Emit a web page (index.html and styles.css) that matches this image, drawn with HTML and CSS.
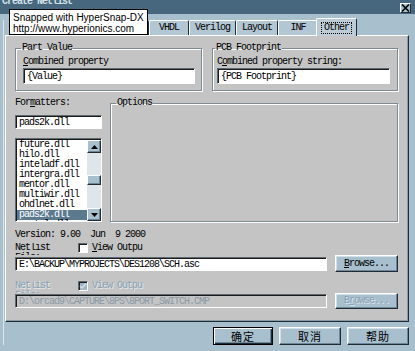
FILE: index.html
```html
<!DOCTYPE html>
<html lang="zh">
<head>
  <meta charset="UTF-8">
  <title>Create Netlist</title>
  <link rel="stylesheet" href="styles.css">
</head>
<body>
  <div class="titlebar">
    <span class="title">Create Netlist</span>
    <span class="close">
      <svg width="9" height="8" viewBox="0 0 9 8"><path d="M1 0.5 L8 7.5 M8 0.5 L1 7.5" stroke="#000" stroke-width="1.6"/></svg>
    </span>
  </div>

  <div class="frame">
    <div class="tabs">
      <!-- first tabs sit under the grabber label -->
      <span class="tab tab-covered"></span>
      <span class="tab">VHDL</span>
      <span class="tab">Verilog</span>
      <span class="tab">Layout</span>
      <span class="tab">INF</span>
      <span class="tab tab-active"><span class="focus">Other</span></span>
    </div>

    <div class="panel">
      <div class="top-row">
        <fieldset class="group">
          <legend>Part Value</legend>
          <div class="caption"><u>C</u>ombined property</div>
          <div class="field">{Value}</div>
        </fieldset>
        <fieldset class="group group-right">
          <legend>PCB Footprint</legend>
          <div class="caption">C<u>o</u>mbined property string:</div>
          <div class="field">{PCB Footprint}</div>
        </fieldset>
      </div>

      <div class="mid-row">
        <div class="formatters">
          <div class="caption">For<u>m</u>atters:</div>
          <div class="field field-small">pads2k.dll</div>
          <div class="listbox">
            <ul class="items">
              <li>future.dll</li>
              <li>hilo.dll</li>
              <li>inteladf.dll</li>
              <li>intergra.dll</li>
              <li>mentor.dll</li>
              <li>multiwir.dll</li>
              <li>ohdlnet.dll</li>
              <li class="selected">pads2k.dll</li>
              <li>protel.dll</li>
            </ul>
            <div class="scrollbar">
              <span class="sb-btn">
                <svg width="7" height="4" viewBox="0 0 7 4"><path d="M3.5 0 L7 4 L0 4 Z" fill="#000"/></svg>
              </span>
              <div class="sb-track">
                <span class="sb-thumb"></span>
              </div>
              <span class="sb-btn">
                <svg width="7" height="4" viewBox="0 0 7 4"><path d="M0 0 L7 0 L3.5 4 Z" fill="#000"/></svg>
              </span>
            </div>
          </div>
        </div>
        <fieldset class="group options">
          <legend>Options</legend>
        </fieldset>
      </div>

      <div class="version">Version: 9.00  Jun  9 2000</div>

      <div class="check-row">
        <div class="row-label">Netlist<br>File:</div>
        <span class="checkbox"></span>
        <span><u>V</u>iew Outpu</span>
      </div>
      <div class="path-row">
        <div class="field field-path">E:\BACKUP\MYPROJECTS\DES1208\SCH.asc</div>
        <button class="btn btn-browse" type="button"><u>B</u>rowse...</button>
      </div>

      <div class="check-row check-row-disabled">
        <div class="row-label">Netlist<br>File:</div>
        <span class="checkbox checkbox-disabled">
          <svg width="8" height="8" viewBox="0 0 8 8"><path d="M1 4 L3 6 L7 1.5" stroke="#d4e0e8" stroke-width="1.5" fill="none"/></svg>
        </span>
        <span>View Outpu</span>
      </div>
      <div class="path-row path-row-disabled">
        <div class="field field-path field-disabled">D:\orcad9\CAPTURE\8PS\8PORT_SWITCH.CMP</div>
        <button class="btn btn-browse btn-disabled" type="button">B<u>r</u>owse...</button>
      </div>
    </div>

    <div class="actions">
      <button class="btn btn-action btn-default" type="button">确定</button>
      <button class="btn btn-action" type="button">取消</button>
      <button class="btn btn-action" type="button">帮助</button>
    </div>
  </div>

  <div class="snap-label">Snapped with HyperSnap-DX<br>http://www.hyperionics.com</div>
</body>
</html>
```

FILE: styles.css
```css
:root {
  --face: #a8bfce;
  --face-light: #d3e0e8;
  --face-dark: #6f8796;
  --edge: #1f2c35;
  --page: #c4c4c4;
  --disabled: #8aa2b3;
}
body {
  margin: 0;
  width: 415px;
  height: 351px;
  overflow: hidden;
  position: relative;
  background: var(--face);
  font-family: "Liberation Mono", "DejaVu Sans Mono", monospace;
  font-size: 10px;
  letter-spacing: -1px;
  line-height: 10px;
  color: #000;
}
u {
  text-decoration: underline;
  text-underline-offset: 1px;
}

/* title bar, top is cut off in the shot */
.titlebar {
  height: 14px;
  background: #46677d;
  display: flex;
  justify-content: space-between;
  align-items: flex-start;
  padding: 0 4px 0 2px;
  overflow: hidden;
}
.title {
  color: #d6e2ea;
  font-weight: bold;
  margin-top: -3px;
}
.close {
  width: 11px;
  height: 10px;
  margin-top: 3px;
  box-sizing: border-box;
  background: var(--face);
  border: 1px solid;
  border-color: #fff var(--edge) var(--edge) #fff;
  display: flex;
  align-items: center;
  justify-content: center;
}

.frame {
  margin-left: 3px;
  border-left: 1px solid #dbe6ed;
  padding-left: 1px;
}

/* tabs */
.tabs {
  display: flex;
  align-items: flex-end;
  height: 15px;
  margin-top: 6px;
  padding-left: 4px;
}
.tab {
  height: 15px;
  box-sizing: border-box;
  min-width: 40px;
  padding: 0 5px;
  text-align: center;
  line-height: 13px;
  background: #b2c6d3;
  border-top: 1px solid #fff;
  border-left: 1px solid #fff;
  border-right: 1px solid var(--edge);
  border-radius: 2px 2px 0 0;
}
.tab-covered {
  width: 140px;
}
.tab-active {
  height: 18px;
  margin: 0 -2px -1px -2px;
  padding: 2px 5px 0 5px;
  position: relative;
  z-index: 1;
  background: #bcccd6;
}
.focus {
  display: inline-block;
  outline: 1px dotted #000;
  padding: 0 2px;
  line-height: 10px;
}

/* property page */
.panel {
  width: 404px;
  height: 287px;
  box-sizing: border-box;
  background: var(--page);
  border-top: 1px solid #fff;
  border-left: 1px solid #fff;
  border-right: 1px solid var(--edge);
  border-bottom: 1px solid var(--edge);
  box-shadow: inset -1px -1px 0 #8c9aa4;
  padding: 7px 10px 0 9px;
}
.top-row {
  display: grid;
  grid-template-columns: 187px 186px;
  column-gap: 10px;
}
.group {
  margin: 0;
  min-width: 0;
  padding: 0 6px 6px 7px;
  border: 1px solid #7d8a92;
  box-shadow: inset 1px 1px 0 #fff, 1px 1px 0 #fff;
}
.group-right {
  padding-left: 4px;
  padding-right: 7px;
}
.group legend {
  padding: 0 1px;
  margin-left: -2px;
  line-height: 10px;
}
.caption {
  margin-top: 4px;
  line-height: 10px;
  white-space: pre;
}
.field {
  height: 16px;
  margin-top: 1px;
  box-sizing: border-box;
  background: #fff;
  border-top: 1px solid #5e6a72;
  border-left: 1px solid #5e6a72;
  border-right: 1px solid #fff;
  border-bottom: 1px solid #fff;
  box-shadow: inset 1px 1px 0 #1b1b1b;
  padding: 2px 0 0 3px;
  line-height: 11px;
  white-space: pre;
  overflow: hidden;
}

.mid-row {
  display: flex;
  gap: 8px;
  margin-top: 7px;
}
.formatters {
  width: 87px;
  flex: none;
}
.formatters .caption {
  margin-top: 0;
}
.field-small {
  height: 14px;
  margin-top: 7px;
  padding-top: 1px;
}
.options {
  flex: 1;
  height: 124px;
  box-sizing: border-box;
}

.listbox {
  height: 84px;
  margin-top: 9px;
  box-sizing: border-box;
  display: flex;
  background: #fff;
  border-top: 1px solid #5e6a72;
  border-left: 1px solid #5e6a72;
  border-right: 1px solid #fff;
  border-bottom: 1px solid #fff;
  box-shadow: inset 1px 1px 0 #1b1b1b;
  padding: 1px 0 0 1px;
  overflow: hidden;
}
.items {
  list-style: none;
  margin: 0;
  padding: 0;
  flex: 1;
}
.items li {
  height: 10px;
  padding-left: 2px;
  white-space: pre;
}
.items .selected {
  background: #5b7a90;
  color: #fff;
}
.scrollbar {
  width: 14px;
  display: flex;
  flex-direction: column;
}
.sb-btn, .sb-thumb {
  box-sizing: border-box;
  background: var(--face);
  border: 1px solid;
  border-color: #fff var(--edge) var(--edge) #fff;
  box-shadow: inset -1px -1px 0 var(--face-dark);
}
.sb-btn {
  height: 13px;
  display: flex;
  align-items: center;
  justify-content: center;
}
.sb-track {
  flex: 1;
  background: #dfe6eb;
}
.sb-thumb {
  display: block;
  height: 10px;
  margin-top: 22px;
}

.version {
  margin-top: 8px;
  white-space: pre;
}
.check-row {
  display: flex;
  align-items: flex-start;
  height: 12px;
  margin-top: 3px;
}
.row-label {
  width: 63px;
  height: 12px;
  overflow: hidden;
}
.checkbox {
  width: 10px;
  height: 10px;
  margin-right: 4px;
  box-sizing: border-box;
  background: #fff;
  border-top: 1px solid #5e6a72;
  border-left: 1px solid #5e6a72;
  border-right: 1px solid #fff;
  border-bottom: 1px solid #fff;
  box-shadow: inset 1px 1px 0 #1b1b1b;
  display: flex;
  align-items: center;
  justify-content: center;
}
.checkbox-disabled {
  background: #9fb4c3;
}
.check-row-disabled {
  margin-top: 9px;
  color: var(--disabled);
  text-shadow: 1px 1px 0 #e2e8ec;
}

.path-row {
  display: flex;
  align-items: center;
  gap: 8px;
  height: 17px;
}
.path-row-disabled {
  height: 16px;
}
.field-path {
  flex: 1;
  height: 14px;
  margin-top: 0;
  padding-top: 1px;
}
.field-disabled {
  background: var(--page);
  color: #8b9aa6;
}

/* buttons */
.btn {
  font: inherit;
  letter-spacing: inherit;
  color: #000;
  margin: 0;
  padding: 0;
  box-sizing: border-box;
  background: var(--face);
  border: 1px solid;
  border-color: #fff var(--edge) var(--edge) #fff;
  box-shadow: inset -1px -1px 0 var(--face-dark), inset 1px 1px 0 var(--face-light);
}
.btn-browse {
  width: 63px;
  height: 17px;
  flex: none;
}
.path-row-disabled .btn-browse {
  height: 16px;
}
.btn-disabled {
  color: var(--disabled);
  text-shadow: 1px 1px 0 #d8e3ea;
}
.actions {
  display: flex;
  justify-content: flex-end;
  gap: 6px;
  width: 404px;
  margin-top: 5px;
}
.btn-action {
  width: 62px;
  height: 18px;
  font-family: "Noto Sans CJK SC", sans-serif;
  font-size: 11px;
  letter-spacing: 1px;
  line-height: 14px;
}
.btn-default {
  width: 60px;
  border: 1px solid #000;
  box-shadow: inset 1px 1px 0 #fff, inset -1px -1px 0 var(--edge), inset -2px -2px 0 var(--face-dark);
}

/* overlay left by the screen grabber */
.snap-label {
  position: absolute;
  left: 9px;
  top: 9px;
  width: 139px;
  height: 26px;
  box-sizing: border-box;
  background: #fff;
  border: 1px solid #000;
  padding: 2px 0 0 3px;
  font-family: "Liberation Sans", Arial, sans-serif;
  font-size: 10px;
  letter-spacing: 0;
  line-height: 11px;
  white-space: nowrap;
}
```
